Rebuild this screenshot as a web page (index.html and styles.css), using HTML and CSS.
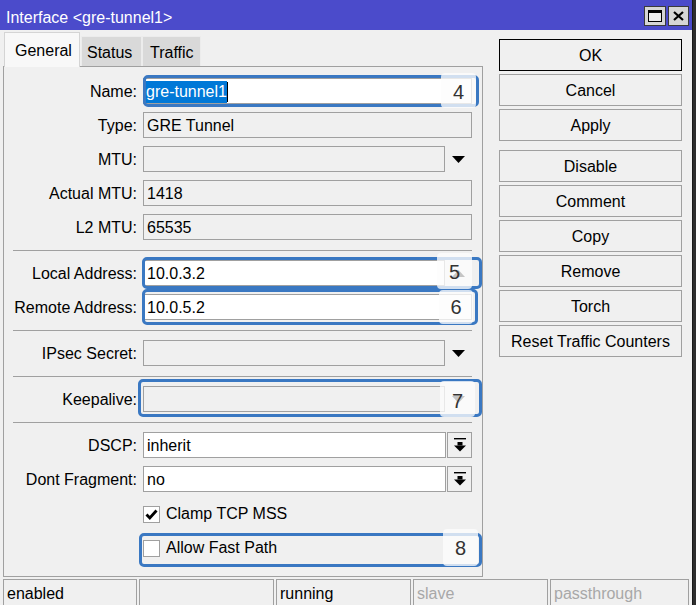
FILE: index.html
```html
<!DOCTYPE html>
<html>
<head>
<meta charset="utf-8">
<title>Interface &lt;gre-tunnel1&gt;</title>
<link rel="stylesheet" href="styles.css">
</head>
<body>
<div class="window">
  <div class="titlebar">
    <span class="title">Interface &lt;gre-tunnel1&gt;</span>
    <div class="tb-buttons">
      <span class="tb-btn max"><svg width="14" height="12" viewBox="0 0 14 12"><rect x="0.5" y="0.5" width="13" height="11" fill="#ececec" stroke="#000"/><rect x="0" y="0" width="14" height="3" fill="#000"/></svg></span>
      <span class="tb-btn close"><svg width="11" height="10" viewBox="0 0 11 10"><path d="M1 1 L10 9 M10 1 L1 9" stroke="#000" stroke-width="2.2" fill="none"/></svg></span>
    </div>
  </div>
  <div class="main">
    <div class="left">
      <div class="tabs">
        <div class="tab active">General</div>
        <div class="tab t-status">Status</div>
        <div class="tab t-traffic">Traffic</div>
      </div>
      <div class="panel">
        <div class="row">
          <span class="label">Name:</span>
          <span class="field white name"><span class="sel">gre-tunnel1</span><span class="caret"></span></span>
        </div>
        <div class="row">
          <span class="label">Type:</span>
          <span class="field">GRE Tunnel</span>
        </div>
        <div class="row">
          <span class="label">MTU:</span>
          <span class="combo"><span class="field short"></span><span class="arrow"><svg width="13" height="7" viewBox="0 0 13 7"><polygon points="0,0 13,0 6.5,7" fill="#000"/></svg></span></span>
        </div>
        <div class="row">
          <span class="label">Actual MTU:</span>
          <span class="field">1418</span>
        </div>
        <div class="row">
          <span class="label">L2 MTU:</span>
          <span class="field">65535</span>
        </div>
        <div class="sep"></div>
        <div class="row">
          <span class="label">Local Address:</span>
          <span class="combo"><span class="field short white">10.0.3.2</span><span class="arrow"><svg width="13" height="7" viewBox="0 0 13 7"><polygon points="0,7 13,7 6.5,0" fill="#000"/></svg></span></span>
        </div>
        <div class="row">
          <span class="label">Remote Address:</span>
          <span class="field white">10.0.5.2</span>
        </div>
        <div class="sep"></div>
        <div class="row">
          <span class="label">IPsec Secret:</span>
          <span class="combo"><span class="field short"></span><span class="arrow"><svg width="13" height="7" viewBox="0 0 13 7"><polygon points="0,0 13,0 6.5,7" fill="#000"/></svg></span></span>
        </div>
        <div class="sep"></div>
        <div class="row">
          <span class="label">Keepalive:</span>
          <span class="combo"><span class="field short"></span><span class="arrow"><svg width="13" height="7" viewBox="0 0 13 7"><polygon points="0,0 13,0 6.5,7" fill="#000"/></svg></span></span>
        </div>
        <div class="sep"></div>
        <div class="row">
          <span class="label">DSCP:</span>
          <span class="combo gap"><span class="field mid white">inherit</span><span class="dd-btn"><svg width="12" height="14" viewBox="0 0 12 14"><rect x="0" y="0" width="12" height="1.4" fill="#000"/><rect x="3.5" y="4" width="5" height="3.5" fill="#000"/><polygon points="0,7.5 12,7.5 6,13.5" fill="#000"/></svg></span></span>
        </div>
        <div class="row">
          <span class="label">Dont Fragment:</span>
          <span class="combo gap"><span class="field mid white">no</span><span class="dd-btn"><svg width="12" height="14" viewBox="0 0 12 14"><rect x="0" y="0" width="12" height="1.4" fill="#000"/><rect x="3.5" y="4" width="5" height="3.5" fill="#000"/><polygon points="0,7.5 12,7.5 6,13.5" fill="#000"/></svg></span></span>
        </div>
        <div class="row">
          <span class="label"></span>
          <span class="check-line"><span class="checkbox"><svg width="15" height="15" viewBox="0 0 15 15"><polyline points="2.5,7.5 5.8,11 12.5,3.5" fill="none" stroke="#000" stroke-width="2.8"/></svg></span>Clamp TCP MSS</span>
        </div>
        <div class="row">
          <span class="label"></span>
          <span class="check-line"><span class="checkbox"></span>Allow Fast Path</span>
        </div>
      </div>
    </div>
    <div class="actions">
      <div class="btn default">OK</div>
      <div class="btn">Cancel</div>
      <div class="btn">Apply</div>
      <div class="btn spaced">Disable</div>
      <div class="btn">Comment</div>
      <div class="btn">Copy</div>
      <div class="btn">Remove</div>
      <div class="btn">Torch</div>
      <div class="btn">Reset Traffic Counters</div>
    </div>
  </div>
  <div class="statusbar">
    <div class="cell c1">enabled</div>
    <div class="cell c2"></div>
    <div class="cell c3">running</div>
    <div class="cell c4 dim">slave</div>
    <div class="cell c5 dim">passthrough</div>
  </div>

  <div class="hl hl4"></div>
  <div class="hl hl5"></div>
  <div class="hl hl6"></div>
  <div class="hl hl7"></div>
  <div class="hl hl8"></div>
  <div class="badge b4">4</div>
  <div class="badge b5">5</div>
  <div class="badge b6">6</div>
  <div class="badge b7">7</div>
  <div class="badge b8">8</div>
</div>
</body>
</html>
```

FILE: styles.css
```css
* { box-sizing: border-box; }
html, body { margin: 0; padding: 0; }
body {
  background: #2e2e2e;
  width: 696px;
  height: 605px;
  overflow: hidden;
  font-family: "Liberation Sans", Arial, sans-serif;
  font-size: 16px;
  color: #000;
}
.window {
  position: relative;
  width: 693px;
  height: 605px;
  background: #f0f0f0;
  border-right: 1px solid #1a1a1a;
  display: flex;
  flex-direction: column;
}

/* title bar */
.titlebar {
  flex: none;
  height: 30px;
  background: #4b4bcb;
  display: flex;
  padding: 0 3px 0 6px;
}
.title {
  color: #fff;
  padding-top: 9px;
  line-height: 18px;
  white-space: nowrap;
}
.tb-buttons {
  margin-left: auto;
  display: flex;
  gap: 2px;
  padding-top: 6px;
}
.tb-btn {
  width: 22px;
  height: 20px;
  background: #d6d6d6;
  border: 1px solid #3a3a3a;
  display: flex;
  align-items: center;
  justify-content: center;
}
.tb-btn.close { width: 21px; }

/* main */
.main {
  flex: none;
  height: 549px;
  display: flex;
}
.left {
  width: 483px;
  padding-left: 3px;
  display: flex;
  flex-direction: column;
}
.tabs {
  height: 36px;
  display: flex;
  align-items: flex-end;
  padding-left: 1px;
  position: relative;
  z-index: 1;
}
.tab {
  height: 30px;
  background: #d9d9d9;
  border: 1px solid #ececec;
  border-bottom: none;
  padding-top: 7px;
  line-height: 18px;
  white-space: nowrap;
}
.tab.active {
  height: 35px;
  margin-bottom: -1px;
  width: 76px;
  padding: 9px 0 0 10px;
  background: #f8f8f8;
  border-color: #d4d4d4;
}
.t-status { width: 61px; padding-left: 5px; margin-left: 1px; }
.t-traffic { width: 59px; padding-left: 7px; }

.panel {
  width: 480px;
  height: 511px;
  border: 1px solid #a0a0a0;
  padding-top: 11px;
  display: flex;
  flex-direction: column;
  gap: 8px;
}
.row {
  display: grid;
  grid-template-columns: 133px 329px;
  column-gap: 6px;
  height: 26px;
}
.label {
  text-align: right;
  padding-top: 1px;
  line-height: 26px;
  white-space: nowrap;
}
.field {
  display: block;
  height: 26px;
  border: 1px solid #a0a0a0;
  background: #f0f0f0;
  padding-top: 1px;
  line-height: 24px;
  padding-left: 3px;
  white-space: nowrap;
  overflow: hidden;
}
.field.white { background: #fff; }
.field.name {
  display: flex;
  align-items: center;
  padding-left: 2px;
  padding-top: 2px;
}
.sel {
  background: #0078d7;
  color: #fff;
  line-height: 22px;
}
.caret {
  width: 1px;
  height: 20px;
  background: #000;
}
.combo { display: flex; }
.combo .short { width: 302px; }
.combo .mid { width: 303px; }
.combo.gap { gap: 1px; }
.arrow {
  width: 27px;
  display: flex;
  align-items: center;
  justify-content: center;
}
.dd-btn {
  width: 25px;
  height: 26px;
  border: 1px solid #a0a0a0;
  background: #f0f0f0;
  display: flex;
  align-items: center;
  justify-content: center;
}
.sep {
  flex: none;
  width: 459px;
  height: 1px;
  background: #a0a0a0;
  margin: 2px 0 1px 9px;
}
.check-line {
  display: flex;
  align-items: center;
  gap: 6px;
  padding-top: 2px;
  line-height: 24px;
  white-space: nowrap;
}
.checkbox {
  width: 17px;
  height: 17px;
  border: 1px solid #a0a0a0;
  background: #fff;
  display: flex;
  align-items: center;
  justify-content: center;
}

/* action buttons */
.actions {
  padding: 9px 0 0 16px;
  display: flex;
  flex-direction: column;
  gap: 3px;
}
.btn {
  width: 183px;
  height: 32px;
  border: 1px solid #a0a0a0;
  text-align: center;
  padding-top: 2px;
  line-height: 28px;
  white-space: nowrap;
}
.btn.default { border-color: #000; }
.btn.spaced { margin-top: 6px; }

/* status bar */
.statusbar {
  flex: none;
  height: 26px;
  display: flex;
  gap: 2px;
  padding-left: 3px;
}
.cell {
  border: 1px solid #a0a0a0;
  border-bottom: none;
  padding: 2px 0 0 3px;
  line-height: 24px;
  white-space: nowrap;
}
.c1 { width: 134px; }
.c2, .c3, .c4 { width: 135px; }
.c5 { width: 139px; }
.cell.dim { color: #a8a8a8; }

/* annotation overlays */
.hl {
  position: absolute;
  border: 3px solid #3a78c2;
  border-radius: 5px;
}
.hl4 { left: 143px; top: 75px; width: 336px; height: 32px; }
.hl5 { left: 142px; top: 257px; width: 340px; height: 32px; }
.hl6 { left: 142px; top: 289px; width: 336px; height: 36px; }
.hl7 { left: 138px; top: 379px; width: 344px; height: 38px; }
.hl8 { left: 139px; top: 533px; width: 343px; height: 34px; }

.badge {
  position: absolute;
  background: rgba(252, 252, 252, 0.78);
  border-radius: 4px;
  font-size: 20px;
  color: #333;
  text-align: center;
  padding-top: 4px;
  line-height: 30px;
}
.b4 { left: 441px; top: 73px; width: 35px; height: 35px; }
.b5 { left: 437px; top: 253px; width: 35px; height: 36px; }
.b6 { left: 439px; top: 290px; width: 34px; height: 34px; padding-top: 2px; }
.b7 { left: 440px; top: 381px; width: 35px; height: 36px; padding-top: 5px; }
.b8 { left: 443px; top: 529px; width: 35px; height: 37px; }
```
